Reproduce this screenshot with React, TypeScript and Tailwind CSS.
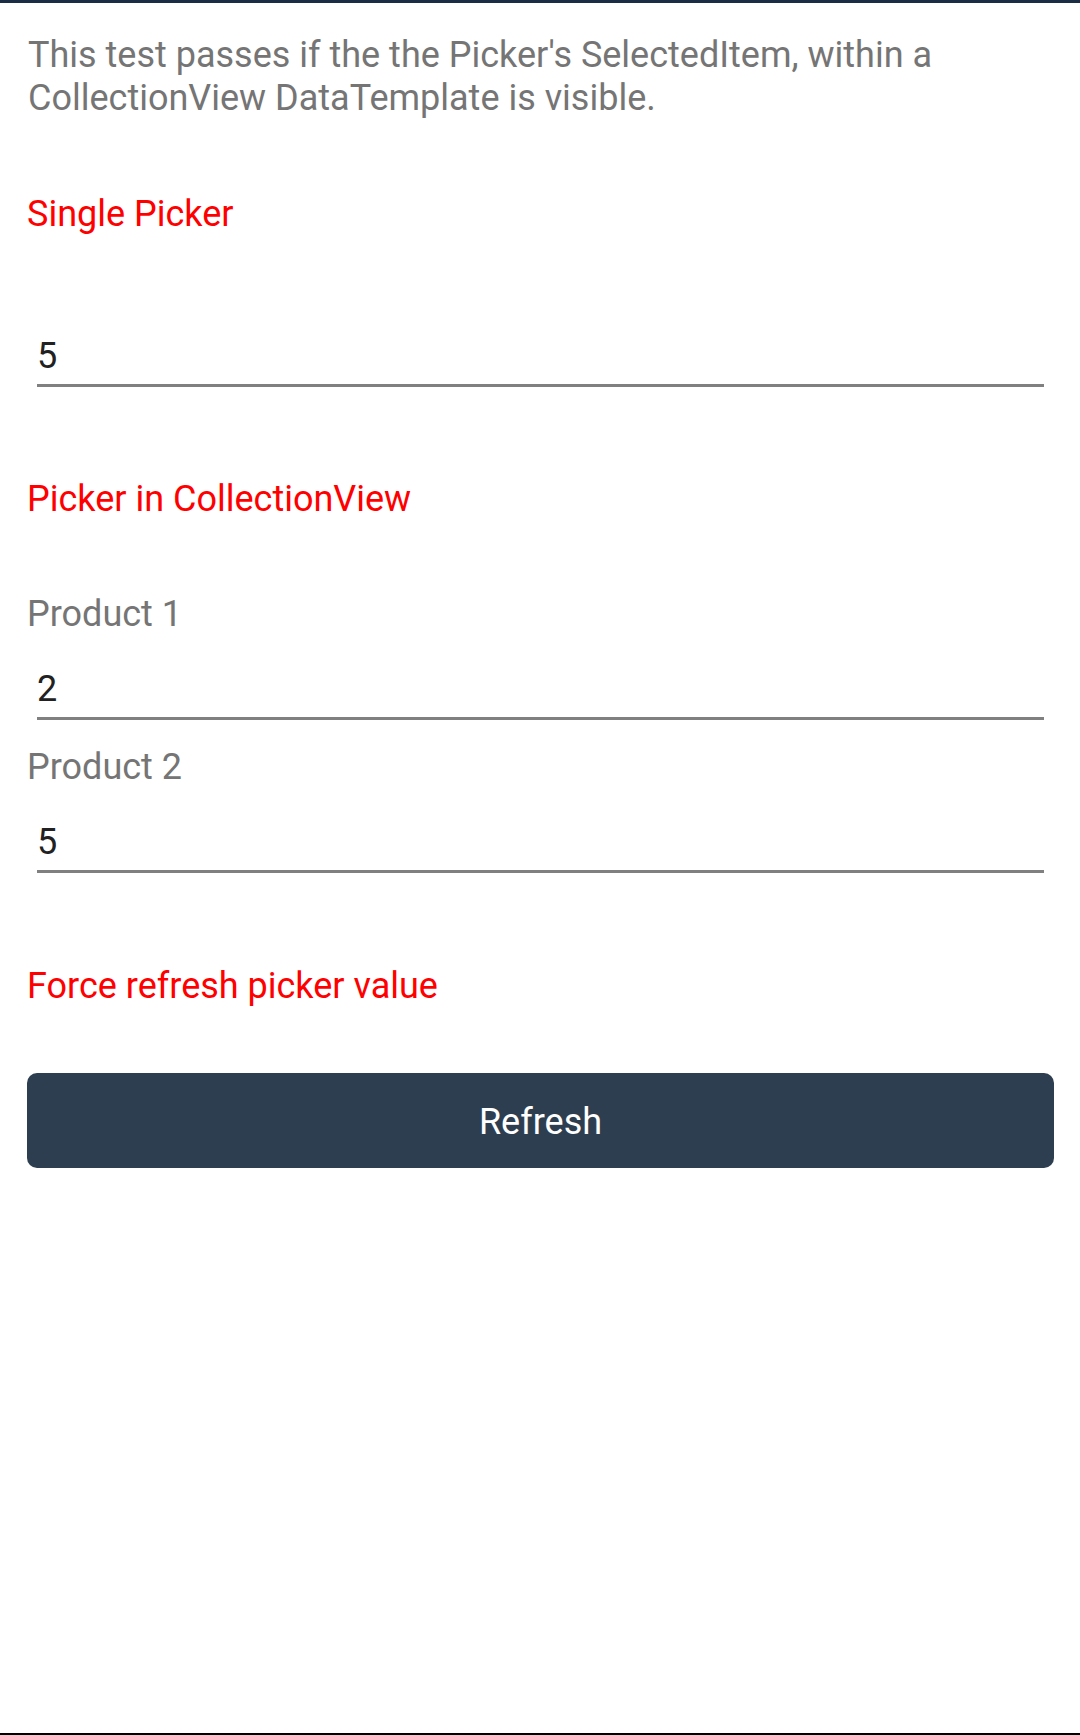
import React from "react";

const products = [
  { name: "Product 1", quantity: 2 },
  { name: "Product 2", quantity: 5 },
];

function PickerField({ value, className = "" }: { value: number | string; className?: string }) {
  return (
    <div className={`mx-[10px] border-b-[3px] border-[#808080] pt-[2px] pb-[6px] ${className}`}>
      <p className="text-[36px] leading-[43px] text-[#212121]">{value}</p>
    </div>
  );
}

function SectionTitle({ children, className = "" }: { children: React.ReactNode; className?: string }) {
  return <p className={`text-[36px] leading-[43px] text-[#ff0000] ${className}`}>{children}</p>;
}

export default function App() {
  return (
    <div
      className="flex min-h-[1735px] flex-col border-t-[3px] border-b-2 border-t-[#1b2d45] border-b-black bg-white"
      style={{ fontFamily: "Roboto, 'Noto Sans', sans-serif" }}
    >
      <div className="flex flex-col pl-[27px] pr-[26px]">
        <p className="mt-[31px] pl-[1px] text-[36px] leading-[43px] text-[#757575]">
          This test passes if the the Picker's SelectedItem, within a CollectionView DataTemplate is visible.
        </p>

        <SectionTitle className="mt-[73px]">Single Picker</SectionTitle>
        <PickerField value={5} className="mt-[97px]" />

        <SectionTitle className="mt-[91px]">Picker in CollectionView</SectionTitle>

        {/* CollectionView */}
        <div className="mt-[72px] flex flex-col">
          {products.map((product, index) => (
            <div key={product.name} className={index > 0 ? "mt-[26px]" : ""}>
              <p className="text-[36px] leading-[43px] text-[#757575]">{product.name}</p>
              <PickerField value={product.quantity} className="mt-[30px]" />
            </div>
          ))}
        </div>

        <SectionTitle className="mt-[92px]">Force refresh picker value</SectionTitle>

        <button className="mt-[65px] flex h-[95px] w-full items-center justify-center rounded-[10px] bg-[#2d3e50] pt-[3px] text-[36px] text-white">
          Refresh
        </button>
      </div>
    </div>
  );
}
